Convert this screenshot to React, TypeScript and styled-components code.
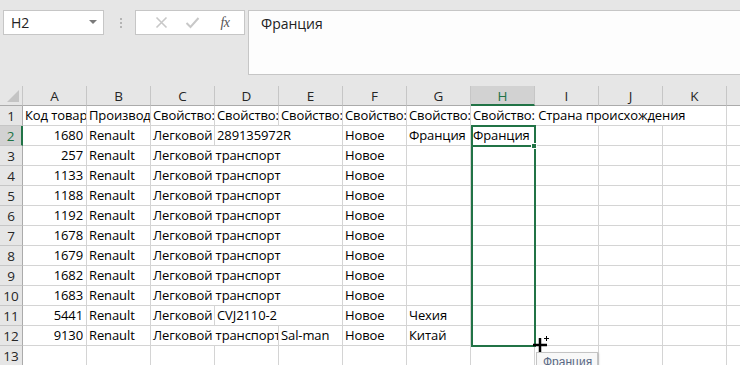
import React from 'react';
import styled, { createGlobalStyle, css } from 'styled-components';

const COLS = ['A', 'B', 'C', 'D', 'E', 'F', 'G', 'H', 'I', 'J', 'K', 'L'];
const COL_W = 64;
const ROW_H = 20;
const HDR_W = 23;
const GREEN = '#217346';
const GRID = '#d4d4d4';
const CELL_FONT = `"Open Sans", "Liberation Sans", sans-serif`;

type CellDef = { col: number; text: string; span?: number; align?: 'left' | 'right' };

const nums = ['1680', '257', '1133', '1188', '1192', '1678', '1679', '1682', '1683', '5441', '9130'];

const buildRows = (): CellDef[][] => {
  const rows: CellDef[][] = [];
  rows.push([
    { col: 0, text: 'Код товара' },
    { col: 1, text: 'Производитель' },
    { col: 2, text: 'Свойство: Тип' },
    { col: 3, text: 'Свойство: Артикул' },
    { col: 4, text: 'Свойство: Модель' },
    { col: 5, text: 'Свойство: Состояние' },
    { col: 6, text: 'Свойство: Страна' },
    { col: 7, text: 'Свойство: Страна происхождения', span: 4 },
  ]);
  nums.forEach((n, i) => {
    const r = i + 2;
    const row: CellDef[] = [
      { col: 0, text: n, align: 'right' },
      { col: 1, text: 'Renault' },
    ];
    if (r === 2) {
      row.push({ col: 2, text: 'Легковой транспорт' });
      row.push({ col: 3, text: '289135972R', span: 2 });
    } else if (r === 11) {
      row.push({ col: 2, text: 'Легковой транспорт' });
      row.push({ col: 3, text: 'CVJ2110-2', span: 2 });
    } else if (r === 12) {
      row.push({ col: 2, text: 'Легковой транспорт', span: 2 });
      row.push({ col: 4, text: 'Sal-man' });
    } else {
      row.push({ col: 2, text: 'Легковой транспорт', span: 3 });
    }
    row.push({ col: 5, text: 'Новое' });
    if (r === 2) {
      row.push({ col: 6, text: 'Франция' });
      row.push({ col: 7, text: 'Франция' });
    }
    if (r === 11) row.push({ col: 6, text: 'Чехия' });
    if (r === 12) row.push({ col: 6, text: 'Китай' });
    rows.push(row);
  });
  rows.push([]);
  return rows;
};

const GlobalStyle = createGlobalStyle`
  html, body { margin: 0; padding: 0; background: #ffffff; overflow: hidden; }
  body { font-family: "Open Sans", "Liberation Sans", sans-serif; }
  * { box-sizing: border-box; }
`;

const Window = styled.div`
  width: 740px;
  height: 365px;
  overflow: hidden;
  display: flex;
  flex-direction: column;
  position: relative;
  background: #fff;
`;

const FormulaBar = styled.div`
  height: 86px;
  flex: none;
  background: #e6e6e6;
  display: flex;
  align-items: flex-start;
  padding: 10px 0 0 3px;
`;

const NameBox = styled.div`
  width: 101px;
  height: 25px;
  background: #fff;
  border: 1px solid #c6c6c6;
  display: flex;
  align-items: center;
  justify-content: space-between;
  padding: 0 6px 0 7px;
  font-size: 14px;
  color: #222;
`;

const DropArrow = styled.span`
  width: 0;
  height: 0;
  border-left: 4px solid transparent;
  border-right: 4px solid transparent;
  border-top: 4px solid #7a7a7a;
  margin-top: -2px;
`;

const Grip = styled.div`
  width: 31px;
  height: 25px;
  display: flex;
  flex-direction: column;
  align-items: center;
  justify-content: center;
  gap: 2px;
  padding-left: 2px;
`;

const GripDot = styled.span`
  width: 2px;
  height: 2px;
  background: #b4b4b4;
`;

const FnButtons = styled.div`
  width: 110px;
  height: 25px;
  background: #fff;
  border: 1px solid #c6c6c6;
  display: flex;
  align-items: center;
  padding-left: 12px;
`;

const FnButton = styled.span<{ $w: number }>`
  width: ${(p) => p.$w}px;
  height: 23px;
  display: flex;
  align-items: center;
  justify-content: center;
`;

const FxText = styled.span`
  font-family: "Liberation Serif", serif;
  font-style: italic;
  font-size: 14px;
  color: #555;
  letter-spacing: -0.5px;
`;

const FormulaInput = styled.div`
  flex: 1;
  margin-left: 3px;
  height: 65px;
  background: #fdfdfd;
  border: 1px solid #c6c6c6;
  border-right: none;
  padding: 3px 0 0 12px;
  font-size: 14px;
  color: #222;
`;

const GridWrap = styled.div`
  position: relative;
  flex: 1;
`;

const Sheet = styled.div`
  display: grid;
  grid-template-columns: ${HDR_W}px repeat(${COLS.length}, ${COL_W}px);
  grid-auto-rows: ${ROW_H}px;
  width: max-content;
`;

const Corner = styled.div`
  background: #e6e6e6;
  border-right: 1px solid #c6c6c6;
  border-bottom: 1px solid #ababab;
  display: flex;
  align-items: flex-end;
  justify-content: flex-end;
  padding: 0 3px 3px 0;
  &::after {
    content: '';
    width: 0;
    height: 0;
    border-left: 12px solid transparent;
    border-bottom: 12px solid #c4c4c4;
  }
`;

const ColHeader = styled.div<{ $active?: boolean }>`
  background: #e6e6e6;
  border-right: 1px solid #c6c6c6;
  border-bottom: 1px solid #ababab;
  display: flex;
  align-items: center;
  justify-content: center;
  font-family: ${CELL_FONT};
  font-size: 13.5px;
  color: #262626;
  padding-top: 1px;
  ${(p) =>
    p.$active &&
    css`
      background: #d2d2d2;
      color: ${GREEN};
      border-bottom: 2px solid ${GREEN};
    `}
`;

const RowHeader = styled.div<{ $active?: boolean }>`
  background: #e6e6e6;
  border-right: 1px solid #ababab;
  border-bottom: 1px solid #c6c6c6;
  display: flex;
  align-items: center;
  justify-content: center;
  font-family: ${CELL_FONT};
  font-size: 13.5px;
  color: #262626;
  ${(p) =>
    p.$active &&
    css`
      background: #d2d2d2;
      color: ${GREEN};
      border-right: 2px solid ${GREEN};
    `}
`;

const Cell = styled.div<{ $span: number; $align: 'left' | 'right' }>`
  grid-column: span ${(p) => p.$span};
  border-right: 1px solid ${GRID};
  border-bottom: 1px solid ${GRID};
  overflow: hidden;
  white-space: nowrap;
  font-family: ${CELL_FONT};
  font-size: 13px;
  letter-spacing: -0.1px;
  line-height: 19px;
  color: #000;
  padding: 0 3px 0 2px;
  text-align: ${(p) => p.$align};
`;

const Selection = styled.div`
  position: absolute;
  border: 2px solid ${GREEN};
  pointer-events: none;
`;

const ActiveLine = styled.div`
  position: absolute;
  height: 2px;
  background: ${GREEN};
`;

const FillHandle = styled.div`
  position: absolute;
  width: 6px;
  height: 6px;
  background: ${GREEN};
  border: 1px solid #fff;
`;

const Cursor = styled.svg`
  position: absolute;
  left: 532px;
  top: 334px;
`;

const Tooltip = styled.div`
  position: absolute;
  left: 536px;
  top: 352px;
  height: 22px;
  padding: 2px 5px 0 6px;
  background: #f8f8f8;
  border: 1px solid #c4c4c4;
  font-family: "Liberation Sans", sans-serif;
  font-size: 12px;
  color: #5a6a85;
  box-shadow: 1px 1px 2px rgba(0, 0, 0, 0.15);
`;

const XIcon = () => (
  <svg width="13" height="13" viewBox="0 0 13 13">
    <path d="M1.5 1.5 L11.5 11.5 M11.5 1.5 L1.5 11.5" stroke="#c8c8c8" strokeWidth="1.6" fill="none" />
  </svg>
);

const CheckIcon = () => (
  <svg width="15" height="13" viewBox="0 0 15 13">
    <path d="M1.5 7 L5.5 11 L13.5 2" stroke="#c8c8c8" strokeWidth="2" fill="none" />
  </svg>
);

export default function App() {
  const rows = buildRows();
  const activeCol = 7;
  const selLeft = HDR_W + activeCol * COL_W;
  const selTop = ROW_H * 2;
  const selRows = 11;

  return (
    <Window>
      <GlobalStyle />
      <FormulaBar>
        <NameBox>
          <span>H2</span>
          <DropArrow />
        </NameBox>
        <Grip>
          <GripDot />
          <GripDot />
          <GripDot />
        </Grip>
        <FnButtons>
          <FnButton $w={26}>
            <XIcon />
          </FnButton>
          <FnButton $w={36}>
            <CheckIcon />
          </FnButton>
          <FnButton $w={30}>
            <FxText>fx</FxText>
          </FnButton>
        </FnButtons>
        <FormulaInput>Франция</FormulaInput>
      </FormulaBar>
      <GridWrap>
        <Sheet>
          <Corner />
          {COLS.map((c, i) => (
            <ColHeader key={c} $active={i === activeCol}>
              {c}
            </ColHeader>
          ))}
          {rows.map((row, ri) => {
            const out: React.ReactNode[] = [];
            out.push(
              <RowHeader key={`h${ri}`} $active={ri === 1}>
                {ri + 1}
              </RowHeader>
            );
            let c = 0;
            while (c < COLS.length) {
              const def = row.find((d) => d.col === c);
              const span = def?.span ?? 1;
              out.push(
                <Cell key={`${ri}-${c}`} $span={span} $align={def?.align ?? 'left'}>
                  {def?.text ?? ''}
                </Cell>
              );
              c += span;
            }
            return <React.Fragment key={ri}>{out}</React.Fragment>;
          })}
        </Sheet>
        <Selection
          style={{ left: selLeft, top: selTop - 1, width: COL_W + 1, height: ROW_H * selRows + 2 }}
        />
        <ActiveLine style={{ left: selLeft, top: selTop + ROW_H - 1, width: COL_W - 3 }} />
        <FillHandle style={{ left: selLeft + COL_W - 4, top: selTop + ROW_H - 3 }} />
      </GridWrap>
      <Cursor width="20" height="20" viewBox="0 0 20 20">
        <path d="M8 4 V18 M1 11 H15" stroke="#000" strokeWidth="2.5" fill="none" />
        <path d="M14.5 2 V7 M12 4.5 H17" stroke="#000" strokeWidth="1" fill="none" />
      </Cursor>
      <Tooltip>Франция</Tooltip>
    </Window>
  );
}
